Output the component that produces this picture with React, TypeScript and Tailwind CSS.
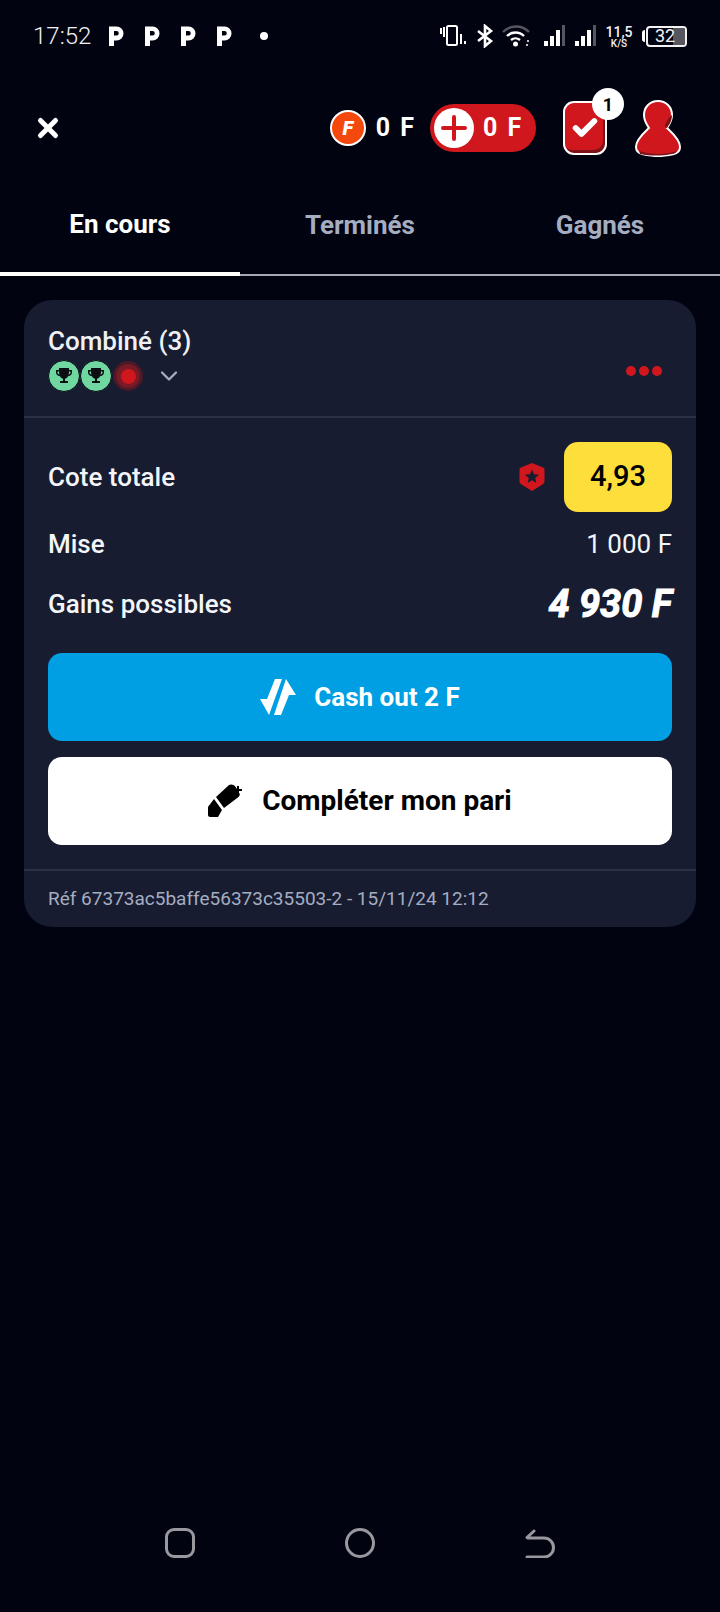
import { Check, ChevronDown, X } from 'lucide-react'

function StatusP() {
  return (
    <svg width="16" height="20" viewBox="0 0 16 20">
      <path d="M1 0.5h7.5a7 7 0 0 1 0 14H6V20H1z M6 5v4.6h2.5a2.3 2.3 0 0 0 0-4.6z" fill="#fff" fillRule="evenodd" />
    </svg>
  )
}

function Signal() {
  return (
    <svg width="22" height="22" viewBox="0 0 22 22" fill="#fff">
      <rect x="0" y="16" width="4" height="5" />
      <rect x="6" y="11" width="4" height="10" />
      <rect x="12" y="5" width="4" height="16" />
      <rect x="18" y="0" width="3" height="21" fill="#55565f" />
    </svg>
  )
}

function StatusBar() {
  return (
    <div className="h-[72px] flex items-center pl-[33px] pr-[33px] text-white">
      <span className="text-[24px] font-light leading-none w-[75px] text-[#f2f2f5]">17:52</span>
      <div className="flex items-center gap-5">
        <StatusP />
        <StatusP />
        <StatusP />
        <StatusP />
      </div>
      <div className="w-2 h-2 rounded-full bg-white ml-7" />
      <div className="ml-auto flex items-center">
        <svg width="30" height="24" viewBox="0 0 30 24" fill="none" stroke="#fff" strokeWidth="2">
          <rect x="9" y="2" width="10" height="19" rx="1.5" />
          <path d="M3 4v6M6 3v10M23 10v10M27 17v3" />
        </svg>
        <svg className="ml-2" width="18" height="24" viewBox="0 0 18 24" fill="none" stroke="#fff" strokeWidth="2.6">
          <path d="M2 7l13 10-6 5V2l6 5L2 17" />
        </svg>
        <svg className="ml-2" width="28" height="24" viewBox="0 0 28 24" fill="none" strokeWidth="2.4">
          <path d="M1 8a18 18 0 0 1 26 0" stroke="#55565f" />
          <path d="M5 12a12 12 0 0 1 17 0M9 16a7 7 0 0 1 9 0" stroke="#fff" />
          <circle cx="13.500" cy="20" r="2.500" fill="#fff" stroke="none" />
          <path d="M25 17h2M24 21h2" stroke="#fff" strokeWidth="1.500" />
        </svg>
        <div className="ml-[14px]"><Signal /></div>
        <div className="ml-[9px]"><Signal /></div>
        <div className="ml-2 w-7 flex flex-col items-center text-[#f2f2f5] font-medium">
          <span className="text-[14px] leading-[14px]">11,5</span>
          <span className="text-[10px] leading-[9px]">K/S</span>
        </div>
        <div className="ml-[9px] flex items-center">
          <div className="w-[3px] h-[12px] bg-white rounded-l-sm mr-[1px]" />
          <div className="w-[41px] h-[21px] border-2 border-[#f2f2f5] rounded-[4px] relative overflow-hidden flex items-center pl-[7px]">
            <div className="absolute right-0 top-0 bottom-0 w-[12px] bg-[#55565f]" />
            <span className="relative text-[18px] leading-none text-[#f2f2f5]">32</span>
          </div>
        </div>
      </div>
    </div>
  )
}

function TopBar() {
  return (
    <div className="h-[112px] flex items-center pl-[33px] pr-[38px] text-white">
      <X size={30} strokeWidth={4} />
      <div className="ml-auto flex items-center">
        <div className="w-9 h-9 rounded-full bg-[#f4480d] border-2 border-white flex items-center justify-center text-[20px] font-black italic leading-none">
          F
        </div>
        <span className="ml-[10px] text-[25px] font-bold tracking-[2px]">0 F</span>
        <div className="ml-[14px] h-12 w-[106px] rounded-full bg-[#cf171d] flex items-center pl-1">
          <div className="w-10 h-10 rounded-full bg-white flex items-center justify-center">
            <svg width="28" height="28" viewBox="0 0 28 28" stroke="#cf171d" strokeWidth="4" strokeLinecap="round">
              <path d="M14 3v22M3 14h22" />
            </svg>
          </div>
          <span className="ml-[9px] text-[25px] font-bold tracking-[2px]">0 F</span>
        </div>
        <div className="relative ml-[26px] w-[46px] h-[56px] flex items-center justify-center">
          <div className="w-[44px] h-[54px] rounded-[11px] border-2 border-white bg-[#cf171d] shadow-[inset_-2px_-3px_0_#7d1218] flex items-center justify-center">
            <Check size={28} strokeWidth={5} />
          </div>
          <div className="absolute -right-4 -top-[12px] w-8 h-8 rounded-full bg-white text-black text-[18px] font-bold flex items-center justify-center">
            1
          </div>
        </div>
        <svg className="ml-[26px]" width="48" height="58" viewBox="0 0 48 58">
          <path
            d="M24 2c8 0 14 6 14 14 0 6-3 10-5 13 3 3 13 11 13 19 0 4-2 6-6 7-5 1-11 2-16 2s-11-1-16-2c-4-1-6-3-6-7 0-8 10-16 13-19-2-3-5-7-5-13C10 8 16 2 24 2z"
            fill="#cf171d"
            stroke="#fff"
            strokeWidth="2"
          />
          <path d="M38 16c0 6-3 10-5 13-3 0-2-4 0-7 1-2 2-4 5-6zM5 52c12 4 26 4 38 0-1 2-3 3-5 3-11 2-21 2-32 0z" fill="#7d1218" />
        </svg>
      </div>
    </div>
  )
}

function Tabs() {
  return (
    <div className="h-[92px] flex border-b-2 border-[#a5a9b5] text-[26px] font-bold">
      <div className="w-60 -mb-[2px] border-b-4 border-white text-white flex items-center justify-center pb-2">En cours</div>
      <div className="w-60 text-[#a5adc1] flex items-center justify-center pb-2">Terminés</div>
      <div className="w-60 text-[#a5adc1] flex items-center justify-center pb-2">Gagnés</div>
    </div>
  )
}

function Trophy() {
  return (
    <div className="w-[32px] h-[32px] rounded-full bg-[#6fd79f] border border-[#0a0d18] flex items-center justify-center">
      <svg width="20" height="20" viewBox="0 0 20 20" fill="#0b0f14">
        <path d="M5 2h10v2h3v2c0 2.500-1.500 4-4 4.300C13.200 11.800 12 12.500 11 12.800V15h3v2H6v-2h3v-2.200C8 12.500 6.800 11.800 6 10.300 3.500 10 2 8.500 2 6V4h3zM3.500 5.500V6c0 1.500.7 2.400 2 2.700-.3-1-.5-2-.5-3.200zm13 0H15c0 1.200-.2 2.200-.5 3.200 1.300-.3 2-1.200 2-2.700z" fillRule="evenodd" />
      </svg>
    </div>
  )
}

function Row({ label, children, className }: { label: string; children: React.ReactNode; className: string }) {
  return (
    <div className={`flex items-center justify-between ${className}`}>
      <span className="text-[26px] font-medium text-[#f4f5f8]">{label}</span>
      {children}
    </div>
  )
}

function BetCard() {
  return (
    <div className="bg-[#171c30] rounded-[28px] text-white">
      <div className="h-[118px] pl-6 pr-[34px] pt-[24px] flex justify-between border-b-2 border-[#2b3047]">
        <div>
          <div className="text-[26px] font-medium leading-[34px] text-[#f0f1f5]">Combiné (3)</div>
          <div className="mt-[2px] flex items-center">
            <Trophy />
            <Trophy />
            <div className="w-[30px] h-[30px] rounded-full bg-[#4a1a28] flex items-center justify-center ml-[1px]">
              <div className="w-[24px] h-[24px] rounded-full bg-[#7a1a26] flex items-center justify-center">
                <div className="w-[15px] h-[15px] rounded-full bg-[#cf171d]" />
              </div>
            </div>
            <ChevronDown className="ml-[12px] text-[#a5adc1]" size={28} strokeWidth={2} />
          </div>
        </div>
        <div className="flex items-center gap-[3px] pt-[2px]">
          <div className="w-[10px] h-[10px] rounded-full bg-[#cf171d]" />
          <div className="w-[10px] h-[10px] rounded-full bg-[#cf171d]" />
          <div className="w-[10px] h-[10px] rounded-full bg-[#cf171d]" />
        </div>
      </div>

      <div className="px-6 pt-6">
        <Row label="Cote totale" className="h-[70px]">
          <div className="flex items-center">
            <svg width="26" height="30" viewBox="0 0 26 30">
              <path d="M13 1l11 4.500c1 .4 1.500 1.200 1.500 2.200V19c0 1.500-.7 2.700-2 3.500L13 29 2.500 22.500C1.200 21.700.5 20.500.5 19V7.700c0-1 .5-1.800 1.500-2.200z" fill="#cf171d" />
              <path d="M13 7.500l2 4.800 5.100.4-3.900 3.300 1.200 5-4.400-2.700-4.400 2.700 1.200-5-3.900-3.300 5.100-.4z" fill="#171c30" />
            </svg>
            <div className="ml-[19px] w-[108px] h-[70px] rounded-[14px] bg-[#fede3a] text-black text-[29px] font-medium flex items-center justify-center">
              4,93
            </div>
          </div>
        </Row>
        <Row label="Mise" className="h-[64px]">
          <span className="text-[26px] text-[#f4f5f8]">1 000 F</span>
        </Row>
        <Row label="Gains possibles" className="h-[56px]">
          <span className="font-['Liberation_Sans_Narrow','Roboto',sans-serif] text-[38px] font-bold italic text-white leading-none [-webkit-text-stroke:1px_white]">
            4 930 F
          </span>
        </Row>

        <button className="mt-[21px] w-full h-[88px] rounded-[14px] bg-[#009fe3] text-white text-[26px] font-bold flex items-center justify-center">
          <svg width="36" height="36" viewBox="0 0 36 36" fill="#fff">
            <path d="M0 20h7L15 0h7L9 36z" />
            <path d="M14 36h7l8-20h7L26 0z" />
          </svg>
          <span className="ml-[18px]">Cash out 2 F</span>
        </button>
        <button className="mt-4 w-full h-[88px] rounded-[14px] bg-white text-black text-[28px] font-bold flex items-center justify-center">
          <svg width="36" height="34" viewBox="0 0 36 34" fill="#000">
            <path d="M21 1l2-.5c2 0 3 .8 4 1.800l2 2.700c-.5 3 1.500 4.500 3 4.500l-.3 1c0 1-.5 2-1.500 2.700L16 24 8 13z" />
            <path d="M6 15l8 11-4 7H2c-1 0-2-1-2-2v-7c0-1 .3-2 1.300-2.700z" />
            <path d="M31 2v3h3v2h-3v3h-2V7h-3V5h3V2z" />
          </svg>
          <span className="ml-[18px]">Compléter mon pari</span>
        </button>
      </div>

      <div className="mt-6 h-[58px] border-t-2 border-[#2b3047] px-6 flex items-center text-[19px] text-[#a5adc1]">
        Réf 67373ac5baffe56373c35503-2 - 15/11/24 12:12
      </div>
    </div>
  )
}

function NavBar() {
  return (
    <div className="h-[92px] relative flex items-start justify-center pt-[8px]">
      <div className="flex items-center text-[#98989e]">
        <div className="w-[30px] h-[30px] rounded-[9px] border-[3px] border-[#98989e]" />
        <div className="ml-[150px] w-[30px] h-[30px] rounded-full border-[3px] border-[#98989e]" />
        <svg className="ml-[150px]" width="30" height="30" viewBox="0 0 30 30" fill="none" stroke="#98989e" strokeWidth="3" strokeLinecap="round">
          <path d="M2 29h17a9.500 9.500 0 0 0 0-19H3M9 3L2 9.500" />
        </svg>
      </div>
    </div>
  )
}

export default function App() {
  return (
    <div className="w-[720px] h-[1612px] bg-[#020311] flex flex-col font-['Roboto',sans-serif] overflow-hidden">
      <StatusBar />
      <TopBar />
      <Tabs />
      <div className="flex-1 px-6 pt-6">
        <BetCard />
      </div>
      <NavBar />
    </div>
  )
}
